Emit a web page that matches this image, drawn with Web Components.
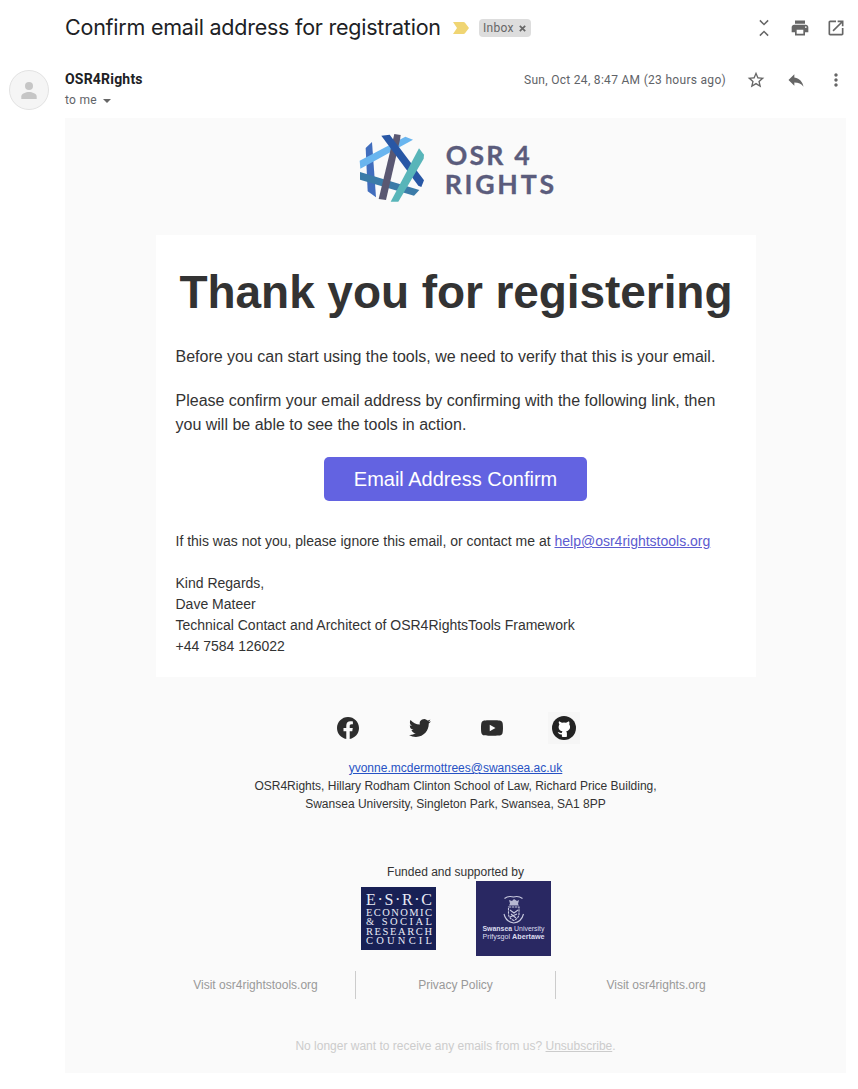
<!DOCTYPE html>
<html lang="en">
<head>
<meta charset="utf-8">
<title>Confirm email address for registration</title>
<style>
html,body{margin:0;padding:0;background:#fff}
body{width:858px;height:1089px;overflow:hidden;font-family:"Liberation Sans",Arial,sans-serif}
</style>
</head>
<body>
<mail-page></mail-page>
<script>
const define = (name, html) => {
  const t = document.createElement('template');
  t.innerHTML = html;
  customElements.define(name, class extends HTMLElement {
    constructor() {
      super();
      this.attachShadow({mode: 'open'}).appendChild(t.content.cloneNode(true));
    }
  });
};

const ICONS = {
  collapse: ['#666', 'M6.4 20.500 7.700 21.800 12 17.500l4.300 4.300 1.300-1.300L12 14.900zM17.600 3.500 16.300 2.200 12 6.500 7.700 2.200 6.400 3.500 12 9.100z'],
  print: ['#666', 'M19 8H5c-1.66 0-3 1.34-3 3v6h4v4h12v-4h4v-6c0-1.66-1.34-3-3-3zm-3 11H8v-5h8v5zm3-7c-.55 0-1-.45-1-1s.45-1 1-1 1 .45 1 1-.45 1-1 1zm-1-9H6v4h12V3z'],
  open: ['#666', 'M19 19H5V5h7V3H5c-1.11 0-2 .9-2 2v14c0 1.1.89 2 2 2h14c1.1 0 2-.9 2-2v-7h-2v7zM14 3v2h3.59l-9.83 9.83 1.41 1.41L19 6.41V10h2V3h-7z'],
  star: ['#666', 'M22 9.24l-7.19-.62L12 2 9.19 8.63 2 9.24l5.46 4.73L5.82 21 12 17.27 18.18 21l-1.63-7.03L22 9.24zM12 15.4l-3.76 2.27 1-4.28-3.32-2.88 4.38-.38L12 6.1l1.71 4.04 4.38.38-3.32 2.88 1 4.28L12 15.4z'],
  reply: ['#666', 'M10 9V5l-7 7 7 7v-4.1c5 0 8.5 1.6 11 5.1-1-5-4-10-11-11z'],
  more: ['#666', 'M12 8c1.1 0 2-.9 2-2s-.9-2-2-2-2 .9-2 2 .9 2 2 2zm0 2c-1.1 0-2 .9-2 2s.9 2 2 2 2-.9 2-2-.9-2-2-2zm0 6c-1.1 0-2 .9-2 2s.9 2 2 2 2-.9 2-2-.9-2-2-2z'],
  facebook: ['#2d2d2d', 'M24 12.073c0-6.627-5.373-12-12-12s-12 5.373-12 12c0 5.99 4.388 10.954 10.125 11.854v-8.385H7.078v-3.47h3.047V9.43c0-3.007 1.792-4.669 4.533-4.669 1.312 0 2.686.235 2.686.235v2.953H15.83c-1.491 0-1.956.925-1.956 1.874v2.25h3.328l-.532 3.47h-2.796v8.385C19.612 23.027 24 18.062 24 12.073z'],
  twitter: ['#2d2d2d', 'M23.953 4.57a10 10 0 01-2.825.775 4.958 4.958 0 002.163-2.723c-.951.555-2.005.959-3.127 1.184a4.92 4.92 0 00-8.384 4.482C7.69 8.095 4.067 6.13 1.64 3.162a4.822 4.822 0 00-.666 2.475c0 1.71.87 3.213 2.188 4.096a4.904 4.904 0 01-2.228-.616v.06a4.923 4.923 0 003.946 4.827 4.996 4.996 0 01-2.212.085 4.936 4.936 0 004.604 3.417 9.867 9.867 0 01-6.102 2.105c-.39 0-.779-.023-1.17-.067a13.995 13.995 0 007.557 2.209c9.053 0 13.998-7.496 13.998-13.985 0-.21 0-.42-.015-.63A9.935 9.935 0 0024 4.59z'],
  youtube: ['#2d2d2d', 'M23.498 6.186a3.016 3.016 0 0 0-2.122-2.136C19.505 3.545 12 3.545 12 3.545s-7.505 0-9.377.505A3.017 3.017 0 0 0 .502 6.186C0 8.07 0 12 0 12s0 3.93.502 5.814a3.016 3.016 0 0 0 2.122 2.136c1.871.505 9.376.505 9.376.505s7.505 0 9.377-.505a3.015 3.015 0 0 0 2.122-2.136C24 15.93 24 12 24 12s0-3.93-.502-5.814zM9.545 15.568V8.432L15.818 12l-6.273 3.568z']
};
customElements.define('ui-icon', class extends HTMLElement {
  connectedCallback() {
    const [fill, d] = ICONS[this.getAttribute('name')];
    const s = this.getAttribute('size') || 20;
    this.attachShadow({mode: 'open'}).innerHTML =
      `<style>:host{display:block;width:${s}px;height:${s}px}svg{display:block}</style>
       <svg width="${s}" height="${s}" viewBox="0 0 24 24" fill="${fill}"><path d="${d}"/></svg>`;
  }
});

define('label-chip', `<style>
:host{display:flex;align-items:center;box-sizing:border-box;width:52px;height:18px;padding-left:4px;border-radius:4px;background:#ddd;color:#666;font:12px/18px Roboto,sans-serif;letter-spacing:.3px}
svg{margin-left:5px}
</style><slot></slot><svg width="7" height="7" viewBox="0 0 7 7"><path d="M.8.8l5.4 5.4M6.2.8L.8 6.2" stroke="#666" stroke-width="1.7"/></svg>`);

define('mail-subject', `<style>
:host{display:flex;align-items:center;height:56px;padding:0 12px 0 65px;box-sizing:border-box}
h2{margin:-2px 0 0;width:388px;font:400 21.5px/28px Inter,sans-serif;letter-spacing:-.23px;color:#202124;white-space:nowrap}
.imp{display:block;margin-right:10px}
.tools{margin-left:auto;display:flex;gap:16px}
</style>
<h2>Confirm email address for registration</h2>
<svg class="imp" width="16" height="12" viewBox="0 0 16 12"><path d="M0 0h10.5Q11.500 0 12 .7L16 6l-4 5.300Q11.500 12 10.500 12H0l4-6z" fill="#f0d573"/></svg>
<label-chip>Inbox</label-chip>
<div class="tools"><ui-icon name="collapse"></ui-icon><ui-icon name="print"></ui-icon><ui-icon name="open"></ui-icon></div>`);

define('mail-sender', `<style>
:host{display:flex;height:62px;box-sizing:border-box;padding:12px 12px 0 9px;font-family:Roboto,sans-serif;color:#5f6368}
.av{flex:none;margin-top:2px;width:40px;height:40px}
.who{margin-left:16px;flex:1}
b{display:block;font:700 14px/20px Roboto,sans-serif;letter-spacing:.2px;color:#202124;margin-top:1px}
.to{display:flex;align-items:center;font-size:12px;line-height:22px;letter-spacing:.3px}
.to i{margin:1px 0 0 6px;border:4px solid transparent;border-top-color:#666;border-bottom:0}
.date{font-size:12px;line-height:24px;letter-spacing:.3px;margin-right:20px;white-space:nowrap}
.tools{display:flex;gap:20px;margin-top:2px}
</style>
<svg class="av" viewBox="0 0 40 40"><circle cx="20" cy="20" r="19.500" fill="#f5f5f5" stroke="#e2e2e2"/><circle cx="20" cy="16" r="4" fill="#c6c6c6"/><path d="M12.300 29v-2.500c0-3 4.500-4.500 7.700-4.500s7.700 1.500 7.700 4.500V29z" fill="#c6c6c6"/></svg>
<div class="who"><b>OSR4Rights</b><div class="to">to me<i></i></div></div>
<div class="date">Sun, Oct 24, 8:47 AM (23 hours ago)</div>
<div class="tools"><ui-icon name="star"></ui-icon><ui-icon name="reply"></ui-icon><ui-icon name="more"></ui-icon></div>`);

define('osr-logo', `<style>:host{display:block;width:215px;height:85px}svg{display:block}text{font-family:Lato,sans-serif;font-weight:700;fill:#5b5c7c;stroke:#5b5c7c;stroke-width:1}</style>
<svg width="215" height="85" viewBox="0 0 645 255">
<path d="M47 69L66 51 78 217 53 199z" fill="#416dbd"/>
<path d="M30 141L208 195 192 212 30 164z" fill="#3b7ba8"/>
<path d="M29 107L166 35 189 44 31 131z" fill="#69b5ef"/>
<path d="M133 27L152 30 150 44 108 225 86 222z" fill="#5a5872"/>
<path d="M94 32L119 29 222 166 214 186 205 182z" fill="#2857a5"/>
<path d="M207 70L222 89 221 101 145 230 122 230z" fill="#58b5b9"/>
<text x="287" y="119" font-size="80" textLength="252" lengthAdjust="spacing">OSR 4</text>
<text x="284" y="206" font-size="80" textLength="328" lengthAdjust="spacing">RIGHTS</text>
</svg>`);

define('mail-card', `<style>
:host{display:block;width:600px;height:442px;background:#fff;box-sizing:border-box;padding:30px 20px 0;color:#333}
h1{margin:0;padding-left:1px;text-align:center;font-size:46px;line-height:55px;letter-spacing:-.07px;white-space:nowrap}
p{margin:0 0 20px;font-size:16px;line-height:24px}
h1+p{margin-top:25px}
.btn{display:block;width:263px;height:44px;margin:0 auto 30px;border-radius:5px;background:#6363e1;color:#fff;font-size:20px;line-height:44px;text-align:center;text-decoration:none}
.s{font-size:14px;line-height:21px;margin-bottom:21px}
.s a{color:#5c5bd0}
</style>
<h1>Thank you for registering</h1>
<p>Before you can start using the tools, we need to verify that this is your email.</p>
<p>Please confirm your email address by confirming with the following link, then you will be able to see the tools in action.</p>
<a class="btn">Email Address Confirm</a>
<p class="s">If this was not you, please ignore this email, or contact me at <a href="#">help@osr4rightstools.org</a></p>
<p class="s">Kind Regards,<br>Dave Mateer<br>Technical Contact and Architect of OSR4RightsTools Framework<br>+44 7584 126022</p>`);

define('github-badge', `<style>:host{display:block;width:32px;height:32px;background:#f6f6f6}svg{display:block}</style>
<svg width="32" height="32" viewBox="0 0 32 32"><circle cx="16" cy="16" r="12" fill="#222"/>
<path d="M11 9.200l3 1.500q2-.400 4 0l3-1.500q.800 1.500.300 3.300c1.700 2.700.500 6.200-3.100 6.700q.7.800.7 2v3.500q-2.500.8-5 0v-2.200c-2.600.400-3.200-1-4.200-2.400 1.800 0 2 1.400 4.100.900q.100-1 .7-1.700c-3.600-.5-4.800-4-3.100-6.800Q10.200 10.700 11 9.200z" fill="#fff"/></svg>`);

define('social-row', `<style>:host{display:grid;grid-template-columns:repeat(4,72px);height:36px;place-items:center;justify-content:center}</style>
<ui-icon name="facebook" size="22"></ui-icon><ui-icon name="twitter" size="22"></ui-icon><ui-icon name="youtube" size="22"></ui-icon><github-badge></github-badge>`);

define('esrc-logo', `<style>:host{display:block;width:75px;height:63px}svg{display:block}text{font-family:"Liberation Serif",serif;fill:#e9ebf6}</style>
<svg width="75" height="63" viewBox="0 0 75 63"><rect width="75" height="63" fill="#182055"/>
<text x="5" y="17.500" font-size="16" textLength="66">E·S·R·C</text>
<text x="5" y="28.500" font-size="10.500" textLength="66">ECONOMIC</text>
<text x="5" y="38" font-size="10.500" textLength="66">&amp; SOCIAL</text>
<text x="5" y="47.500" font-size="10.500" textLength="66">RESEARCH</text>
<text x="5" y="57" font-size="10.500" textLength="66">COUNCIL</text></svg>`);

define('swansea-logo', `<style>:host{display:block;width:75px;height:75px}svg{display:block}text{font-family:"Liberation Sans",sans-serif;font-size:7px;fill:#dcdcee}.b{font-weight:700}</style>
<svg width="75" height="75" viewBox="0 0 75 75"><rect width="75" height="75" fill="#292862"/>
<g fill="none" stroke="#c9cadf" stroke-width="1.100"><path d="M28.500 17.500q4-3 9-1.500 5-1.500 9 1.500"/><path d="M32.500 26h10.500v7q0 4-5.200 6.500-5.300-2.500-5.300-6.500z" stroke-dasharray="2.500 .7"/><path d="M28 33q2 8 9.700 9Q45.500 41 47.500 33"/><path d="M34 29l4 3 4-3M34 36l7-3M35 33l5 4"/></g>
<path d="M33 19l3 1 2-2 3 2 2-1-1 4 1 1.500H33l1-2z" fill="#b7b8d2"/>
<text x="6.500" y="50" textLength="62" lengthAdjust="spacingAndGlyphs"><tspan class="b">Swansea</tspan> University</text>
<text x="6.500" y="57.500" textLength="62" lengthAdjust="spacingAndGlyphs">Prifysgol <tspan class="b">Abertawe</tspan></text></svg>`);

define('mail-footer', `<style>
:host{display:block;width:600px;font-size:12px;line-height:18px;color:#333;text-align:center}
social-row{margin-bottom:13px}
a{color:#2752c4}
.fund{margin-top:50px}
.logos{display:flex;justify-content:center;align-items:center;gap:40px;margin-bottom:15px}
.menu{display:grid;grid-template-columns:200px 200px 200px;line-height:28px;color:#999;margin-bottom:38px}
.menu span+span{box-sizing:border-box;border-left:1px solid #ccc;margin-left:-1px}
.menu span:last-child{padding-left:1px}
.un,.un a{color:#ccc}
.addr div:nth-child(n+2){white-space:nowrap}
</style>
<social-row></social-row>
<div class="addr"><div><a href="#">yvonne.mcdermottrees@swansea.ac.uk</a></div><div>OSR4Rights, Hillary Rodham Clinton School of Law, Richard Price Building,</div><div>Swansea University, Singleton Park, Swansea, SA1 8PP</div></div>
<div class="fund">Funded and supported by</div>
<div class="logos"><esrc-logo></esrc-logo><swansea-logo></swansea-logo></div>
<div class="menu"><span>Visit osr4rightstools.org</span><span>Privacy Policy</span><span>Visit osr4rights.org</span></div>
<div class="un">No longer want to receive any emails from us? <a href="#">Unsubscribe</a>.</div>`);

define('mail-body', `<style>
:host{display:flex;flex-direction:column;align-items:center;width:781px;height:955px;margin-left:65px;padding-top:7px;box-sizing:border-box;background:#fafafa}
osr-logo{margin:0 0 25px 3px}
mail-card{margin-bottom:33px}
</style><osr-logo></osr-logo><mail-card></mail-card><mail-footer></mail-footer>`);

define('mail-page', `<style>:host{display:block}</style><mail-subject></mail-subject><mail-sender></mail-sender><mail-body></mail-body>`);
</script>
</body>
</html>
